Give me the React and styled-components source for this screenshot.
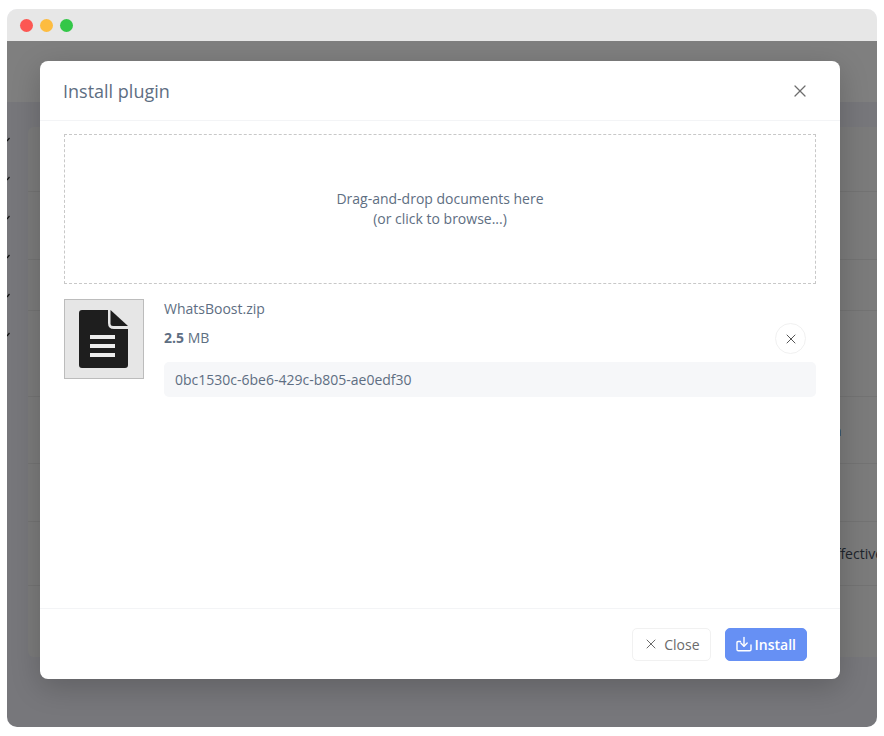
import React from 'react';
import styled, { createGlobalStyle } from 'styled-components';
import { X } from 'lucide-react';

const GlobalStyle = createGlobalStyle`
  html, body {
    margin: 0;
    padding: 0;
    background: #fff;
    font-family: "Open Sans", "Liberation Sans", sans-serif;
  }
  * {
    box-sizing: border-box;
  }
`;

const Page = styled.div`
  width: 884px;
  height: 736px;
  padding: 9px 7px;
`;

const Browser = styled.div`
  position: relative;
  width: 870px;
  height: 718px;
  border-radius: 10px;
  overflow: hidden;
  background: #eeeff7;
  display: flex;
  flex-direction: column;
`;

const TitleBar = styled.div`
  height: 32px;
  flex: none;
  background: #e7e7e7;
  display: flex;
  align-items: center;
  gap: 7px;
  padding: 1px 0 0 13px;
`;

const Dot = styled.span`
  width: 13px;
  height: 13px;
  border-radius: 50%;
  background: ${props => props.color};
`;

const Viewport = styled.div`
  position: relative;
  flex: 1;
  overflow: hidden;
  display: flex;
  flex-direction: column;
`;

const TopBar = styled.div`
  height: 61px;
  flex: none;
  background: #fff;
`;

const Main = styled.div`
  flex: 1;
  display: flex;
`;

const SideMarks = styled.div`
  width: 21px;
  flex: none;
  overflow: hidden;
  padding-top: 34px;
  display: flex;
  flex-direction: column;
  gap: 33px;
`;

const Mark = styled.svg`
  display: block;
  width: 3px;
  height: 6px;
`;

const Card = styled.div`
  flex: 1;
  min-width: 0;
  height: 530px;
  margin-top: 25px;
  background: #f6f6f6;
  border-radius: 6px 0 0 6px;
  overflow: hidden;
`;

const Row = styled.div`
  height: ${props => props.height}px;
  border-bottom: 1px solid #e6e6e6;
  display: flex;
  align-items: center;
  padding-left: ${props => props.indent || 0}px;
  font-size: 14px;
  color: #3f4a5a;
  white-space: nowrap;

  &:last-child {
    border-bottom: 0;
  }
`;

const Overlay = styled.div`
  position: absolute;
  inset: 0;
  background: rgba(0, 0, 0, 0.5);
`;

const Modal = styled.div`
  position: absolute;
  top: 20px;
  left: 33px;
  width: 800px;
  height: 618px;
  background: #fff;
  border-radius: 8px;
  box-shadow: 0 8px 30px rgba(0, 0, 0, 0.2);
  display: flex;
  flex-direction: column;
`;

const ModalHeader = styled.div`
  height: 60px;
  flex: none;
  border-bottom: 1px solid #f3f4f6;
  display: flex;
  align-items: center;
  justify-content: space-between;
  padding: 0 30px 0 23px;
`;

const ModalTitle = styled.div`
  font-size: 18px;
  color: #5e6e82;
`;

const HeaderClose = styled.button`
  border: 0;
  padding: 0;
  background: none;
  color: #6e6e6e;
  display: flex;
`;

const ModalBody = styled.div`
  flex: 1;
  padding: 13px 24px 0;
`;

const DropZone = styled.div`
  height: 150px;
  border: 1px dashed #c8c8c8;
  display: flex;
  flex-direction: column;
  align-items: center;
  justify-content: center;
  font-size: 14px;
  line-height: 20px;
  color: #5e6e82;
`;

const FileRow = styled.div`
  margin-top: 15px;
  display: flex;
  gap: 20px;
`;

const Thumb = styled.div`
  width: 80px;
  height: 80px;
  flex: none;
  background: #e6e6e6;
  border: 1px solid #bcbcbc;
  display: flex;
  align-items: center;
  justify-content: center;
`;

const FileInfo = styled.div`
  position: relative;
  flex: 1;
  min-width: 0;
`;

const FileName = styled.div`
  font-size: 14px;
  line-height: 20px;
  color: #5e6e82;
`;

const FileSize = styled.div`
  margin-top: 9px;
  font-size: 14px;
  line-height: 20px;
  color: #5e6e82;

  strong {
    font-weight: 700;
  }
`;

const FileId = styled.div`
  margin-top: 14px;
  height: 35px;
  padding: 0 11px;
  background: #f6f7f9;
  border-radius: 5px;
  display: flex;
  align-items: center;
  font-size: 14px;
  color: #5e6e82;
`;

const RemoveButton = styled.button`
  position: absolute;
  top: 24px;
  right: 10px;
  width: 31px;
  height: 31px;
  padding: 0;
  background: #fff;
  border: 1px solid #f1f1f1;
  border-radius: 50%;
  color: #555;
  display: flex;
  align-items: center;
  justify-content: center;
`;

const ModalFooter = styled.div`
  height: 71px;
  flex: none;
  border-top: 1px solid #f3f4f6;
  display: flex;
  align-items: center;
  justify-content: flex-end;
  gap: 14px;
  padding: 0 33px 0 0;
`;

const Button = styled.button`
  height: 33px;
  padding: 0 10px;
  border-radius: 5px;
  font-family: inherit;
  font-size: 14px;
  display: flex;
  align-items: center;
  gap: ${props => (props.$primary ? 3 : 5)}px;
  font-weight: ${props => (props.$primary ? 600 : 400)};
  color: ${props => (props.$primary ? '#fff' : '#6b6b6b')};
  background: ${props => (props.$primary ? '#6690f4' : '#fff')};
  border: 1px solid ${props => (props.$primary ? '#6690f4' : '#f1f1f1')};
`;

const FileGlyph = () => (
  <svg width="50" height="58" viewBox="0 0 50 58">
    <path d="M3 0H29V13Q29 19 35 19H49V55Q49 58 46 58H3Q0 58 0 55V3Q0 0 3 0Z" fill="#1e1e1e" />
    <path d="M31.500 0L49 16H34Q31.500 16 31.500 14Z" fill="#1e1e1e" />
    <rect x="11" y="25" width="25" height="4" fill="#ededed" />
    <rect x="11" y="34" width="25" height="4" fill="#ededed" />
    <rect x="11" y="43" width="25" height="4" fill="#ededed" />
  </svg>
);

const DownloadGlyph = () => (
  <svg width="16" height="16" viewBox="0 0 16 16" fill="none" stroke="currentColor" strokeWidth="1.4" strokeLinecap="round" strokeLinejoin="round">
    <path d="M8 1.500V10" />
    <path d="M4.800 7L8 10.200L11.200 7" />
    <path d="M4.500 5.500H2Q1 5.500 1 6.500V13.500Q1 14.800 2.300 14.800H13.700Q15 14.800 15 13.500V9" />
  </svg>
);

const rows = [
  { height: 65 },
  { height: 68 },
  { height: 51 },
  { height: 86, text: 'Manage the e', indent: 720 },
  { height: 67, text: 'Connect to your crm', indent: 680 },
  { height: 58 },
  { height: 64, text: 'Quickly and effectively', indent: 720 },
  { height: 71 },
];

const App = () => (
  <Page>
    <GlobalStyle />
    <Browser>
      <TitleBar>
        <Dot color="#fc5753" />
        <Dot color="#fdbc40" />
        <Dot color="#33c748" />
      </TitleBar>
      <Viewport>
        <TopBar />
        <Main>
          <SideMarks>
            {[0, 1, 2, 3, 4, 5].map(i => (
              <Mark key={i} viewBox="0 0 3 6">
                <path d="M0 5L2.500 2" stroke="#222" strokeWidth="1.200" fill="none" />
              </Mark>
            ))}
          </SideMarks>
          <Card>
            {rows.map((row, i) => (
              <Row key={i} height={row.height} indent={row.indent}>
                {row.text}
              </Row>
            ))}
          </Card>
        </Main>
        <Overlay />
        <Modal>
          <ModalHeader>
            <ModalTitle>Install plugin</ModalTitle>
            <HeaderClose>
              <X size={20} strokeWidth={1.5} />
            </HeaderClose>
          </ModalHeader>
          <ModalBody>
            <DropZone>
              <div>Drag-and-drop documents here</div>
              <div>(or click to browse...)</div>
            </DropZone>
            <FileRow>
              <Thumb>
                <FileGlyph />
              </Thumb>
              <FileInfo>
                <FileName>WhatsBoost.zip</FileName>
                <FileSize>
                  <strong>2.5</strong> MB
                </FileSize>
                <FileId>0bc1530c-6be6-429c-b805-ae0edf30</FileId>
                <RemoveButton>
                  <X size={16} strokeWidth={1.5} />
                </RemoveButton>
              </FileInfo>
            </FileRow>
          </ModalBody>
          <ModalFooter>
            <Button>
              <X size={16} strokeWidth={1.5} />
              Close
            </Button>
            <Button $primary>
              <DownloadGlyph />
              Install
            </Button>
          </ModalFooter>
        </Modal>
      </Viewport>
    </Browser>
  </Page>
);

export default App;
